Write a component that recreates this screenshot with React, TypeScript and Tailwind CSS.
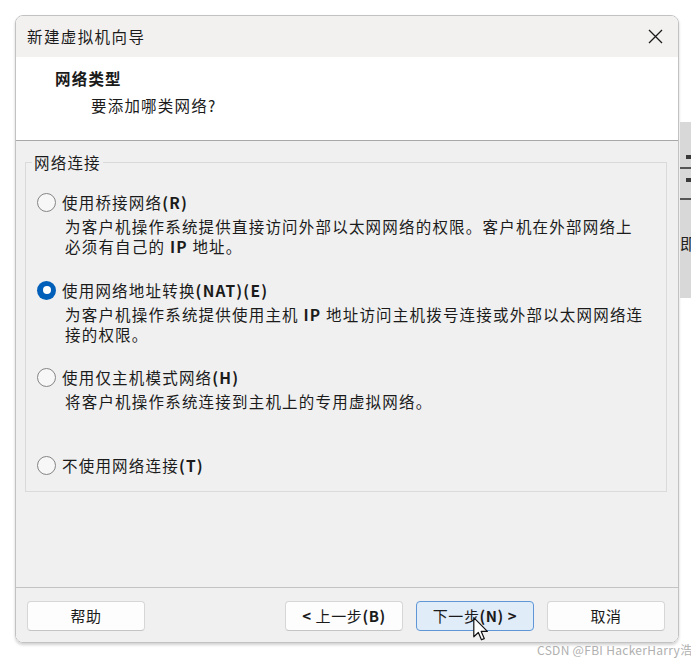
import React from 'react';

const cjk = "font-['Noto_Sans_CJK_SC','Noto_Sans',sans-serif]";

function Radio({ checked }: { checked?: boolean }) {
  if (checked) {
    return (
      <span className="flex h-[19px] w-[19px] shrink-0 items-center justify-center rounded-full bg-[#005fb8]">
        <span className="h-[8px] w-[8px] rounded-full bg-white" />
      </span>
    );
  }
  return <span className="h-[19px] w-[19px] shrink-0 rounded-full border border-[#858585] bg-[#f7f7f7]" />;
}

function Option({
  checked,
  label,
  lines,
  className,
}: {
  checked?: boolean;
  label: React.ReactNode;
  lines?: React.ReactNode[];
  className?: string;
}) {
  return (
    <div className={`ml-[11px] ${className ?? ''}`}>
      <div className="flex h-[20px] items-center gap-[6px]">
        <Radio checked={checked} />
        <span className="leading-[20px]">{label}</span>
      </div>
      {lines && (
        <div className="mt-[4px] pl-[28px]">
          {lines.map((l, i) => (
            <div key={i} className="leading-[20px]">
              {l}
            </div>
          ))}
        </div>
      )}
    </div>
  );
}

function Button({ children, primary }: { children: React.ReactNode; primary?: boolean }) {
  return (
    <button
      type="button"
      className={`flex h-[30px] w-[118px] items-center justify-center rounded-[4px] border text-[15px] tracking-[0.6px] text-[#1b1b1b] ${
        primary ? 'border-[#5f97d6] bg-[#e0ecf8]' : 'border-[#d6d6d6] border-b-[#c4c4c4] bg-[#fdfdfd]'
      }`}
    >
      {children}
    </button>
  );
}

export default function App() {
  return (
    <div className={`relative flex h-[664px] w-[691px] items-start overflow-hidden bg-white ${cjk} text-[#1b1b1b]`}>
      {/* wizard dialog */}
      <div className="ml-[15px] mt-[15px] flex h-[628px] w-[665px] flex-col overflow-hidden rounded-[8px] border border-[#c2c2c2] shadow-[0_2px_3px_rgba(0,0,0,0.18)]">
        <div className="flex h-[41px] items-center justify-between bg-[#f3f1f0] pl-[11px] pr-[15px]">
          <span className="text-[15.5px] tracking-[1.4px]">新建虚拟机向导</span>
          <svg width="15" height="15" viewBox="0 0 15 15">
            <path d="M1 1 L14 14 M14 1 L1 14" stroke="#1b1b1b" strokeWidth="1.3" fill="none" />
          </svg>
        </div>

        <div className="h-[84px] border-b border-[#a8a8a8] bg-white pl-[39px] pt-[11px] text-[15.5px] tracking-[1.2px]">
          <div className="font-bold leading-[20px]">网络类型</div>
          <div className="ml-[36px] mt-[7px] leading-[20px]">要添加哪类网络?</div>
        </div>

        <div className="h-[446px] bg-[#f0f0f0] pl-[9px] pt-[11px] text-[15.5px] tracking-[1.2px]">
          <fieldset className="w-[642px] border border-[#dadada] pb-[16px]">
            <legend className="ml-[6px] px-[2px] leading-[20px]">网络连接</legend>
            <Option
              className="mt-[20px]"
              label={
                <>
                  使用桥接网络<span className="font-bold">(R)</span>
                </>
              }
              lines={[
                '为客户机操作系统提供直接访问外部以太网网络的权限。客户机在外部网络上',
                <>
                  必须有自己的 <span className="font-bold">IP</span> 地址。
                </>,
              ]}
            />
            <Option
              className="mt-[24px]"
              checked
              label={
                <>
                  使用网络地址转换<span className="font-bold">(NAT)(E)</span>
                </>
              }
              lines={[
                <>
                  为客户机操作系统提供使用主机 <span className="font-bold">IP</span> 地址访问主机拨号连接或外部以太网网络连
                </>,
                '接的权限。',
              ]}
            />
            <Option
              className="mt-[23px]"
              label={
                <>
                  使用仅主机模式网络<span className="font-bold">(H)</span>
                </>
              }
              lines={['将客户机操作系统连接到主机上的专用虚拟网络。']}
            />
            <Option
              className="mt-[44px]"
              label={
                <>
                  不使用网络连接<span className="font-bold">(T)</span>
                </>
              }
            />
          </fieldset>
        </div>

        <div className="flex flex-1 items-start border-t border-[#c4c4c4] bg-[#f0f0f0] pl-[11px] pr-[13px] pt-[13px]">
          <Button>帮助</Button>
          <div className="flex-1" />
          <div className="flex gap-[13px]">
            <Button>
              <span className="font-bold">&lt;</span>&nbsp;上一步<span className="font-bold">(B)</span>
            </Button>
            <Button primary>
              下一步<span className="font-bold">(N)</span>&nbsp;<span className="font-bold">&gt;</span>
            </Button>
            <Button>取消</Button>
          </div>
        </div>
      </div>

      {/* window behind, peeking out on the right */}
      <div className="relative ml-[1px] mt-[122px] h-[176px] w-[11px] shrink-0 overflow-hidden bg-[#d8d8d8]">
        <svg width="11" height="176" viewBox="0 0 11 176" className="block">
          <rect x="6" y="33" width="5" height="4" fill="#3a3a3a" />
          <rect x="0" y="45" width="11" height="2" fill="#555" />
          <rect x="6" y="56" width="5" height="4" fill="#3a3a3a" />
          <rect x="0" y="76" width="11" height="2" fill="#555" />
        </svg>
        <span className="absolute left-[0px] top-[111px] text-[16px] leading-[20px] text-[#222]">即</span>
      </div>

      {/* mouse pointer */}
      <svg className="absolute left-[473px] top-[617px]" width="16" height="24" viewBox="0 0 13 20">
        <path
          d="M0.5 0.5 L0.5 16.5 L4.3 12.9 L6.9 19 L9.2 18 L6.7 12 L11.8 12 Z"
          fill="#fff"
          stroke="#111"
          strokeWidth="1"
          strokeLinejoin="round"
        />
      </svg>

      {/* watermark */}
      <span className="absolute left-[537px] top-[641px] whitespace-nowrap text-[12px] leading-[18px] tracking-[0.3px] text-[#b0b0b0]">
        CSDN @FBI HackerHarry浩
      </span>
    </div>
  );
}
